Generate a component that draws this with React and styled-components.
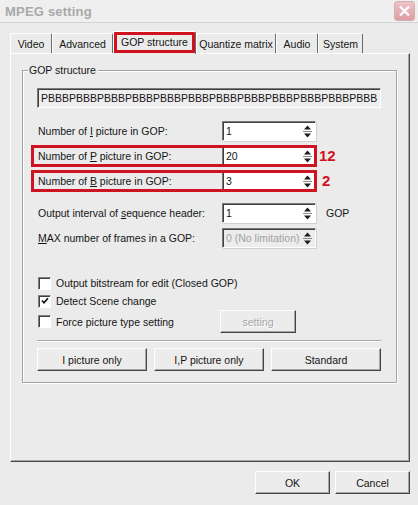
import styled, { createGlobalStyle, css } from "styled-components";

const GlobalStyle = createGlobalStyle`
  html, body {
    margin: 0;
    padding: 0;
  }
  body {
    background: #ebebeb;
    font-family: "Liberation Sans", Arial, sans-serif;
    font-size: 10.5px;
    color: #151515;
  }
`;

const Window = styled.div`
  width: 418px;
  height: 505px;
  display: flex;
  flex-direction: column;
  background: #ebebeb;
  overflow: hidden;
`;

const TitleBar = styled.div`
  height: 22px;
  display: flex;
  align-items: center;
  justify-content: space-between;
  padding: 0 3px 0 5px;
  background: #efefef;
  border-bottom: 1px solid #d4d4d4;
`;

const Title = styled.span`
  font-size: 13px;
  font-weight: bold;
  color: #a9a9a9;
  letter-spacing: 0.2px;
`;

const CloseButton = styled.div`
  width: 19px;
  height: 18px;
  border-radius: 3px;
  border: 1px solid #d6aeb1;
  background: linear-gradient(#eec3c6, #dc9ea3);
  display: flex;
  align-items: center;
  justify-content: center;
`;

const Body = styled.div`
  flex: 1;
  display: flex;
  flex-direction: column;
  padding: 8px 8px 0 10px;
`;

const TabStrip = styled.div`
  height: 22px;
  display: flex;
  align-items: flex-end;
`;

const Tab = styled.div`
  box-sizing: border-box;
  width: ${(p) => p.$w}px;
  height: 20px;
  display: flex;
  align-items: center;
  justify-content: center;
  border-top: 1px solid #fff;
  border-left: 1px solid #fff;
  border-right: 1px solid #6a6a6a;
  border-radius: 2px 2px 0 0;
  background: #ebebeb;
  padding-top: 1px;
  ${(p) =>
    p.$active &&
    css`
      position: relative;
      z-index: 1;
      height: 23px;
      margin-bottom: -1px;
      padding-top: 0;
      padding-bottom: 2px;
      outline: 3px solid #d0121e;
      outline-offset: -4px;
    `}
`;

const Panel = styled.div`
  box-sizing: border-box;
  width: 400px;
  height: 409px;
  border: 1px solid;
  border-color: #fff #4a4a4a #4a4a4a #fff;
  box-shadow: inset -1px -1px 0 #a8a8a8;
  padding: 16px 0 0 11px;
`;

const GroupBox = styled.div`
  position: relative;
  box-sizing: border-box;
  width: 375px;
  border: 1px solid #a4a4a4;
  box-shadow: inset 1px 1px 0 #fff, 1px 1px 0 #fff;
  padding: 17px 0 11px 9px;
  display: flex;
  flex-direction: column;
`;

const GroupLabel = styled.span`
  position: absolute;
  top: -7px;
  left: 5px;
  padding: 0 2px 0 1px;
  background: #ebebeb;
  line-height: 12px;
`;

const SequenceField = styled.div`
  box-sizing: border-box;
  width: 344px;
  height: 20px;
  margin-left: 5px;
  padding-left: 3px;
  display: flex;
  align-items: center;
  background: #eeeeee;
  border: 1px solid;
  border-color: #7a7a7a #fff #fff #7a7a7a;
  box-shadow: inset 1px 1px 0 #404040;
  overflow: hidden;
  white-space: nowrap;
`;

const Rows = styled.div`
  margin-top: 13px;
  display: flex;
  flex-direction: column;
  gap: 5px;
`;

const Row = styled.div`
  display: flex;
  align-items: center;
  width: max-content;
  ${(p) => p.$spaced && css`margin-top: 7px;`}
`;

const RowBody = styled.div`
  display: flex;
  align-items: center;
  ${(p) =>
    p.$marked &&
    css`
      outline: 3px solid #cc1422;
      outline-offset: -2px;
    `}
`;

const Label = styled.span`
  box-sizing: border-box;
  width: 190px;
  padding-left: 6px;
  color: ${(p) => (p.$disabled ? "#3a3a3a" : "#151515")};
`;

const Spinner = styled.div`
  box-sizing: border-box;
  width: 94px;
  height: 20px;
  display: flex;
  align-items: stretch;
  background: ${(p) => (p.$disabled ? "#ececec" : "#fff")};
  border: 1px solid;
  border-color: #7a7a7a #fff #fff #7a7a7a;
  box-shadow: inset 1px 1px 0 #404040, 1px 1px 0 #d0d0d0;
`;

const SpinValue = styled.span`
  flex: 1;
  display: flex;
  align-items: center;
  padding-left: 3px;
  color: ${(p) => (p.$disabled ? "#a2a2a2" : "#151515")};
`;

const SpinButtons = styled.div`
  width: 14px;
  display: flex;
  align-items: center;
  justify-content: center;
  margin-right: 1px;
`;

const Note = styled.span`
  margin-left: ${(p) => p.$gap}px;
  color: #d0121e;
  font-size: 15px;
  font-weight: bold;
  line-height: 16px;
`;

const Unit = styled.span`
  margin-left: 10px;
`;

const Checks = styled.div`
  margin-top: 26px;
  display: flex;
  flex-direction: column;
`;

const CheckRow = styled.label`
  display: flex;
  align-items: center;
  height: ${(p) => (p.$tall ? 23 : 18)}px;
  padding-left: 6px;
`;

const CheckBox = styled.span`
  box-sizing: border-box;
  width: 13px;
  height: 13px;
  background: #fff;
  border: 1px solid;
  border-color: #808080 #fff #fff #808080;
  box-shadow: inset 1px 1px 0 #404040;
  display: flex;
  align-items: center;
  justify-content: center;
  margin-right: 5px;
`;

const CheckText = styled.span`
  width: ${(p) => (p.$w ? `${p.$w}px` : "auto")};
`;

const Button = styled.button`
  box-sizing: border-box;
  width: ${(p) => p.$w}px;
  height: 23px;
  padding: 0;
  font: inherit;
  color: ${(p) => (p.disabled ? "#a4a4a4" : "#151515")};
  background: #ececec;
  border: 1px solid;
  border-color: #fff #454545 #454545 #fff;
  box-shadow: inset -1px -1px 0 #a6a6a6;
  ${(p) => p.disabled && css`text-shadow: 1px 1px 0 #fff;`}
`;

const Separator = styled.div`
  width: 344px;
  margin: 7px 0 0 5px;
  border-top: 1px solid #a6a6a6;
  border-bottom: 1px solid #fff;
`;

const ButtonRow = styled.div`
  margin: 6px 0 0 5px;
  display: flex;
  gap: 7px;
`;

const Footer = styled.div`
  display: flex;
  justify-content: flex-end;
  gap: 5px;
  margin-top: 9px;
  padding-right: 1px;
  width: 400px;
`;

const tabs = [
  { name: "Video", w: 42 },
  { name: "Advanced", w: 61 },
  { name: "GOP structure", w: 83, active: true },
  { name: "Quantize matrix", w: 80 },
  { name: "Audio", w: 42 },
  { name: "System", w: 45 },
];

function SpinArrows() {
  return (
    <svg width="9" height="14" viewBox="0 0 9 14">
      <polygon points="4.5,1.5 8,5.5 1,5.5" fill="#1a1a1a" />
      <line x1="0" y1="7.5" x2="9" y2="7.5" stroke="#8a8a8a" strokeWidth="1" />
      <polygon points="1,9.5 8,9.5 4.5,13.5" fill="#1a1a1a" />
    </svg>
  );
}

function NumberBox({ value, disabled }) {
  return (
    <Spinner $disabled={disabled}>
      <SpinValue $disabled={disabled}>{value}</SpinValue>
      <SpinButtons>
        <SpinArrows />
      </SpinButtons>
    </Spinner>
  );
}

function Check({ checked }) {
  return (
    <CheckBox>
      {checked && (
        <svg width="8" height="8" viewBox="0 0 8 8">
          <path d="M1 3.5 L3 5.8 L7 1.2" fill="none" stroke="#111" strokeWidth="1.7" />
        </svg>
      )}
    </CheckBox>
  );
}

export default function App() {
  return (
    <>
      <GlobalStyle />
      <Window>
        <TitleBar>
          <Title>MPEG setting</Title>
          <CloseButton>
            <svg width="13" height="12" viewBox="0 0 13 12">
              <path d="M2 1.5 L11 10.5 M11 1.5 L2 10.5" stroke="#fff" strokeWidth="2.2" />
            </svg>
          </CloseButton>
        </TitleBar>
        <Body>
          <TabStrip>
            {tabs.map((t) => (
              <Tab key={t.name} $w={t.w} $active={t.active}>
                {t.name}
              </Tab>
            ))}
          </TabStrip>
          <Panel>
            <GroupBox>
              <GroupLabel>GOP structure</GroupLabel>
              <SequenceField>PBBBPBBBPBBBPBBBPBBBPBBBPBBBPBBBPBBBPBBBPBBBPBBB</SequenceField>
              <Rows>
                <Row>
                  <RowBody>
                    <Label>
                      Number of <u>I</u> picture in GOP:
                    </Label>
                    <NumberBox value="1" />
                  </RowBody>
                </Row>
                <Row>
                  <RowBody $marked>
                    <Label>
                      Number of <u>P</u> picture in GOP:
                    </Label>
                    <NumberBox value="20" />
                  </RowBody>
                  <Note $gap={3}>12</Note>
                </Row>
                <Row>
                  <RowBody $marked>
                    <Label>
                      Number of <u>B</u> picture in GOP:
                    </Label>
                    <NumberBox value="3" />
                  </RowBody>
                  <Note $gap={6}>2</Note>
                </Row>
                <Row $spaced>
                  <RowBody>
                    <Label>
                      Output interval of <u>s</u>equence header:
                    </Label>
                    <NumberBox value="1" />
                  </RowBody>
                  <Unit>GOP</Unit>
                </Row>
                <Row>
                  <RowBody>
                    <Label>
                      <u>M</u>AX number of frames in a GOP:
                    </Label>
                    <NumberBox value="0 (No limitation)" disabled />
                  </RowBody>
                </Row>
              </Rows>
              <Checks>
                <CheckRow>
                  <Check />
                  <CheckText>Output bitstream for edit (Closed GOP)</CheckText>
                </CheckRow>
                <CheckRow>
                  <Check checked />
                  <CheckText>Detect Scene change</CheckText>
                </CheckRow>
                <CheckRow $tall>
                  <Check />
                  <CheckText $w={164}>Force picture type setting</CheckText>
                  <Button $w={76} disabled>
                    setting
                  </Button>
                </CheckRow>
              </Checks>
              <Separator />
              <ButtonRow>
                <Button $w={110}>I picture only</Button>
                <Button $w={110}>I,P picture only</Button>
                <Button $w={110}>Standard</Button>
              </ButtonRow>
            </GroupBox>
          </Panel>
          <Footer>
            <Button $w={75}>OK</Button>
            <Button $w={75}>Cancel</Button>
          </Footer>
        </Body>
      </Window>
    </>
  );
}
